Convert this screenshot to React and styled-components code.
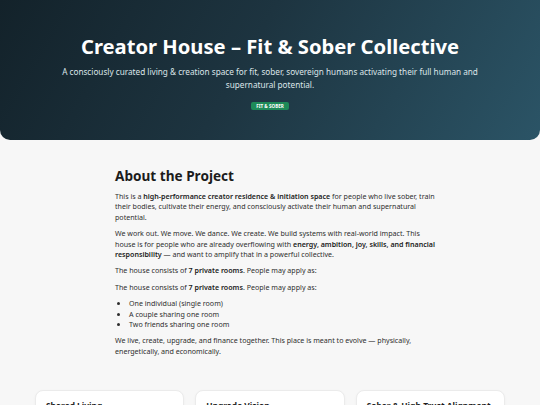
import React from "react";
import styled, { createGlobalStyle } from "styled-components";

const GlobalStyle = createGlobalStyle`
  html, body {
    margin: 0;
    padding: 0;
    background: #f7f7f7;
    font-family: "Noto Sans", "Open Sans", sans-serif;
  }
  * {
    box-sizing: border-box;
  }
`;

const features = [
  { title: "Shared Living" },
  { title: "Upgrade Vision" },
  { title: "Sober & High-Trust Alignment" },
];

export default function App() {
  return (
    <Page>
      <GlobalStyle />
      <Hero>
        <HeroTitle>Creator House – Fit &amp; Sober Collective</HeroTitle>
        <HeroSubtitle>
          A consciously curated living &amp; creation space for fit, sober, sovereign humans
          activating their full human and supernatural potential.
        </HeroSubtitle>
        <Badge>Fit &amp; Sober</Badge>
      </Hero>

      <About>
        <SectionTitle>About the Project</SectionTitle>
        <Paragraph>
          This is a <strong>high-performance creator residence &amp; initiation space</strong> for
          people who live sober, train their bodies, cultivate their energy, and consciously
          activate their human and supernatural potential.
        </Paragraph>
        <Paragraph>
          We work out. We move. We dance. We create. We build systems with real-world impact. This
          house is for people who are already overflowing with{" "}
          <strong>energy, ambition, joy, skills, and financial responsibility</strong> — and want to
          amplify that in a powerful collective.
        </Paragraph>
        <Paragraph>
          The house consists of <strong>7 private rooms</strong>. People may apply as:
        </Paragraph>
        <Paragraph>
          The house consists of <strong>7 private rooms</strong>. People may apply as:
        </Paragraph>
        <List>
          <li>One individual (single room)</li>
          <li>A couple sharing one room</li>
          <li>Two friends sharing one room</li>
        </List>
        <Paragraph>
          We live, create, upgrade, and finance together. This place is meant to evolve —
          physically, energetically, and economically.
        </Paragraph>
      </About>

      <Cards>
        {features.map((f) => (
          <Card key={f.title}>
            <CardTitle>{f.title}</CardTitle>
          </Card>
        ))}
      </Cards>
    </Page>
  );
}

const Page = styled.div`
  width: 540px;
  height: 405px;
  overflow: hidden;
`;

const Hero = styled.header`
  background: linear-gradient(120deg, #13222a 0%, #1d3440 45%, #2b5466 100%);
  border-radius: 0 0 10px 10px;
  padding: 33px 40px 0;
  height: 140px;
  text-align: center;
  color: #fff;
`;

const HeroTitle = styled.h1`
  margin: 0;
  font-size: 20.2px;
  font-weight: 700;
  line-height: 26px;
`;

const HeroSubtitle = styled.p`
  margin: 6px 0 0;
  font-size: 8.2px;
  line-height: 13px;
  color: #dde5e9;
`;

const Badge = styled.span`
  display: inline-block;
  margin-top: 4px;
  padding: 1px 5px;
  background: #1e8a58;
  color: #fff;
  border-radius: 2px;
  font-size: 4.6px;
  font-weight: 700;
  line-height: 6px;
  text-transform: uppercase;
`;

const About = styled.section`
  padding: 27px 100px 0 115px;
  color: #2e2e2e;
`;

const SectionTitle = styled.h2`
  margin: 0 0 6px;
  font-size: 13.6px;
  font-weight: 700;
  line-height: 18px;
  color: #1c1c1c;
`;

const Paragraph = styled.p`
  margin: 0 0 6px;
  font-size: 7.1px;
  line-height: 10.4px;

  strong {
    font-weight: 600;
    color: #1c1c1c;
  }
`;

const List = styled.ul`
  margin: 0 0 6px;
  padding-left: 14px;
  font-size: 7.1px;
  line-height: 10.4px;
`;

const Cards = styled.div`
  display: grid;
  grid-template-columns: repeat(3, 1fr);
  gap: 11px;
  padding: 28px 35px 0;
`;

const Card = styled.div`
  background: #fff;
  border: 1px solid #ebebeb;
  border-radius: 8px;
  padding: 9px 10px;
  height: 60px;
  box-shadow: 0 1px 3px rgba(0, 0, 0, 0.04);
`;

const CardTitle = styled.h3`
  margin: 0;
  font-size: 8.4px;
  font-weight: 700;
  line-height: 12px;
  color: #1c1c1c;
`;
